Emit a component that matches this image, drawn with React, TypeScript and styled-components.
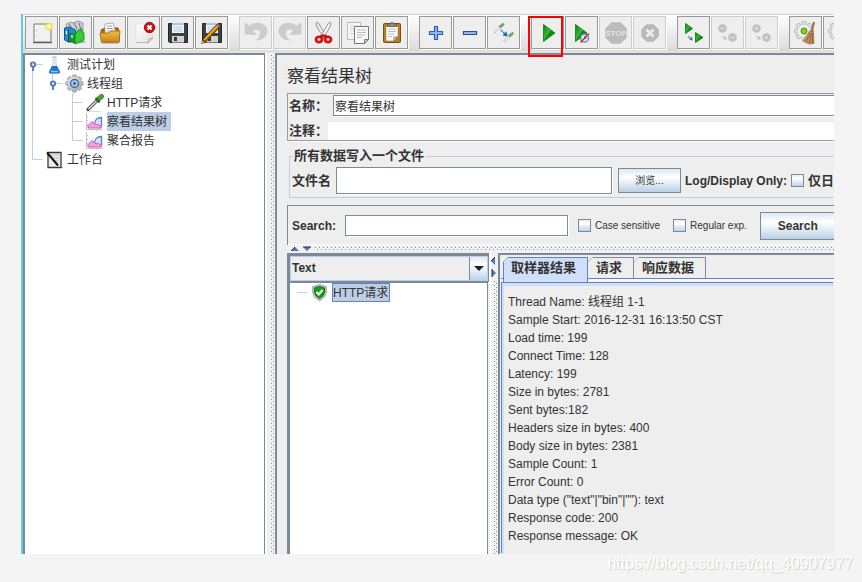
import React from "react";
import styled, { createGlobalStyle, css } from "styled-components";

const c = {
  page: "#f4f4f4",
  panel: "#eeeeee",
  dark: "#7a8a99",
  light: "#b8cfe5",
  blue: "#6382bf",
  tab: "#cfdff8",
  text: "#333333",
};

const dots = css`
  background-image: conic-gradient(from 270deg at 1px 1px, #8090a4 90deg, transparent 0),
    conic-gradient(from 270deg at 1px 1px, #8090a4 90deg, transparent 0);
  background-size: 4px 4px;
  background-position: 0 0, 2px 2px;
`;

const Global = createGlobalStyle`
  * { box-sizing: border-box; }
  body {
    margin: 0;
    background: ${c.page};
    color: ${c.text};
    font: 12px/18px "Liberation Sans", "Noto Sans CJK SC", sans-serif;
  }
  button, input, select { font: inherit; color: inherit; margin: 0; padding: 0; border-radius: 0; }
  ul { list-style: none; margin: 0; padding: 0; }
`;

const Page = styled.div`
  display: flex;
  flex-direction: column;
  min-height: 100vh;
  padding: 14px 28px 0 21px;
`;

const Window = styled.main`
  display: flex;
  flex: 1;
  flex-direction: column;
  overflow: hidden;
  border-left: 2px solid #62c9ee;
  background: ${c.panel};
`;

const Toolbar = styled.div`
  display: flex;
  gap: 11px;
  height: 39px;
  padding: 1px 0 0 2px;
  border-top: 1px solid #cfcfcf;
  background: linear-gradient(#ffffff, #dedcde 34px, #cccccc 35px, #e6e6e6 36px, #dddddd);
`;

const ToolGroup = styled.div`
  position: relative;
  display: flex;
  flex-shrink: 0;
  gap: 1px;
`;

const ToolButton = styled.button`
  flex-shrink: 0;
  width: 33px;
  height: 33px;
  border: 1px solid #999999;
  background: ${c.panel};
  box-shadow: 1px 1px 0 #ffffff;
  &:disabled { border-color: #cccccc; }
  svg { display: block; }
`;

const Highlight = styled.span`
  position: absolute;
  top: 0;
  left: -3px;
  width: 35px;
  height: 41px;
  border: 2px solid #ff0000;
  pointer-events: none;
`;

const Body = styled.div`
  display: flex;
  flex: 1;
`;

const TreePane = styled.nav`
  flex: 0 0 242px;
  border: solid ${c.dark};
  border-width: 2px 1px 0 2px;
  background: #ffffff;
`;

const VSplitter = styled.div<{ $arrows?: boolean }>`
  display: flex;
  flex: 0 0 ${(p) => (p.$arrows ? 9 : 10)}px;
  flex-direction: column;
  gap: 4px;
  padding-left: ${(p) => (p.$arrows ? 3 : 4)}px;
  padding-top: ${(p) => (p.$arrows ? 4 : 2)}px;
  border-left: 2px solid #ffffff;
  background: #f1f1f1;
  &::after { content: ""; flex: 1; width: 4px; ${dots} }
  svg { display: block; margin-left: -3px; }
`;

const HSplitter = styled.div`
  display: flex;
  align-items: center;
  gap: 4px;
  height: 8px;
  padding-left: 4px;
  background: #f1f1f1;
  &::after { content: ""; flex: 1; height: 4px; ${dots} }
`;

const TreeRow = styled.li`
  display: flex;
  align-items: center;
  height: 19px;
  svg { display: block; flex-shrink: 0; }
`;

const NodeLabel = styled.span<{ $selected?: boolean; $framed?: boolean }>`
  height: 19px;
  margin-left: 2px;
  padding: 0 ${(p) => (p.$framed ? "1px 0 0" : "4px 0 0")};
  border: ${(p) => (p.$framed ? `1px solid ${c.blue}` : "0")};
  background: ${(p) => (p.$selected ? "#bccde6" : "transparent")};
  line-height: ${(p) => (p.$framed ? 18 : 20)}px;
  white-space: nowrap;
`;

const Editor = styled.section`
  display: flex;
  flex: 1;
  flex-direction: column;
  min-width: 0;
  overflow: hidden;
  padding-left: 10px;
  border: solid ${c.dark};
  border-width: 2px 0 0 2px;
  white-space: nowrap;
`;

const Title = styled.h1`
  margin: 0;
  padding-top: 6px;
  font-size: 17px;
  font-weight: 400;
  line-height: 32px;
`;

const NameBox = styled.div`
  display: grid;
  gap: 6px;
  padding: 1px 0 0 1px;
  border: solid #9a9a9a;
  border-width: 1px 0 1px 1px;
  box-shadow: 0 1px 0 #ffffff;
`;

const NameRow = styled.div`
  display: flex;
  align-items: center;
`;

const Label = styled.label<{ $width?: number }>`
  flex: 0 0 auto;
  width: ${(p) => (p.$width ? `${p.$width}px` : "auto")};
  font-size: 13px;
  font-weight: 700;
  line-height: 18px;
`;

const LatinLabel = styled(Label)`
  font-size: 12px;
`;

const LogCaption = styled.span`
  flex: 0 0 106px;
  margin-left: 4px;
  font-weight: 700;
`;

const TextInput = styled.input<{ $width?: number; $height: number; $plain?: boolean }>`
  flex: ${(p) => (p.$width ? `0 0 ${p.$width}px` : "1")};
  min-width: 0;
  height: ${(p) => p.$height}px;
  padding-left: 1px;
  border: ${(p) => (p.$plain ? "0" : `1px solid ${c.dark}`)};
  border-right-width: ${(p) => (p.$width ? 1 : 0)}px;
  background: #ffffff;
  box-shadow: ${(p) => (p.$plain ? "none" : "1px 1px 0 #ffffff")};
  outline: none;
`;

const FileSet = styled.fieldset`
  min-width: 0;
  margin: 7px 0 0 2px;
  padding: 3px 0 3px 2px;
  border: 1px solid ${c.light};
  border-right: 0;
  legend {
    margin-left: 1px;
    padding: 0 2px 0 1px;
    font-size: 13px;
    font-weight: 700;
    line-height: 16px;
  }
`;

const Row = styled.div`
  display: flex;
  align-items: center;
`;

const PushButton = styled.button<{ $big?: boolean }>`
  flex: 0 0 ${(p) => (p.$big ? 76 : 63)}px;
  height: ${(p) => (p.$big ? 28 : 25)}px;
  margin-left: ${(p) => (p.$big ? 13 : 6)}px;
  border: 1px solid ${c.dark};
  background: linear-gradient(#dde8f3, #ffffff 35%, #e6eef6 60%, #b8cfe5);
  font-size: ${(p) => (p.$big ? 12 : 10)}px;
  font-weight: ${(p) => (p.$big ? 700 : 400)};
`;

const Check = styled.input`
  appearance: none;
  flex: 0 0 13px;
  height: 13px;
  border: 1px solid ${c.dark};
  background: linear-gradient(#e4edf6, #ffffff 30%, #bed3e8);
`;

const CheckLabel = styled.label<{ $gap: number; $bold?: boolean }>`
  display: flex;
  flex-shrink: 0;
  align-items: center;
  gap: 4px;
  margin-left: ${(p) => p.$gap}px;
  font-size: ${(p) => (p.$bold ? 13 : 10)}px;
  font-weight: ${(p) => (p.$bold ? 700 : 400)};
`;

const SearchBar = styled(Row)`
  height: 40px;
  margin-top: 7px;
  padding-left: 4px;
  border: solid ${c.dark};
  border-width: 1px 0 0 1px;
  box-shadow: inset 0 -1px 0 #ffffff;
`;

const Lower = styled.div`
  display: flex;
  flex: 1;
`;

const SamplePane = styled.div`
  display: flex;
  flex: 0 0 202px;
  flex-direction: column;
  border: solid ${c.dark};
  border-width: 2px 0 0 2px;
`;

const Combo = styled.div`
  display: flex;
  height: 27px;
  border: 1px solid ${c.dark};
  box-shadow: inset 0 0 0 1px ${c.light};
`;

const ComboSelect = styled.select`
  appearance: none;
  flex: 1;
  padding: 0 0 2px 2px;
  border: 0;
  outline: none;
  background: linear-gradient(${c.dark}, ${c.dark}) calc(100% - 18px) 0 / 1px 100% no-repeat,
    linear-gradient(#dde8f3, #ffffff 35%, #e6eef6 60%, #b8cfe5) 100% 0 / 18px 100% no-repeat;
  box-shadow: inset 0 0 0 1px ${c.light};
  font-weight: 700;
`;

const ComboArrow = styled.svg`
  align-self: center;
  margin-left: -14px;
  margin-right: 4px;
  pointer-events: none;
`;

const SampleTree = styled.ul`
  flex: 1;
  margin-right: 1px;
  border: solid ${c.dark};
  border-width: 1px 1px 0 1px;
  background: #ffffff;
`;

const ResultPane = styled.div`
  display: flex;
  flex: 1;
  flex-direction: column;
  min-width: 0;
  padding-left: 1px;
  border: solid ${c.dark};
  border-width: 2px 0 0 2px;
`;

const TabList = styled.div`
  display: flex;
  align-items: flex-start;
  height: 27px;
  padding: 2px 0 0 2px;
  background: linear-gradient(${c.blue}, ${c.blue}) 0 23px / 100% 1px no-repeat,
    linear-gradient(#f7f7f7, #f7f7f7) 0 24px / 100% 3px no-repeat;
`;

const Tab = styled.button<{ $active?: boolean }>`
  height: ${(p) => (p.$active ? 25 : 21)}px;
  padding: 0 ${(p) => (p.$active ? "11px 4px 7px" : "11px 0 8px")};
  border: solid ${(p) => (p.$active ? c.blue : c.dark)};
  border-width: 1px 1px 0 ${(p) => (p.$active ? 1 : 0)}px;
  background: linear-gradient(
      135deg,
      transparent 3px,
      ${(p) => (p.$active ? c.blue : c.dark)} 3px,
      ${(p) => (p.$active ? c.blue : c.dark)} 4px,
      ${(p) => (p.$active ? c.tab : c.panel)} 4px
    ) border-box;
  clip-path: polygon(5px 0, 100% 0, 100% 100%, 0 100%, 0 5px);
  font-size: 13px;
  font-weight: 700;
  line-height: 20px;
`;

const Results = styled.div`
  flex: 1;
  margin: 1px 0 0 1px;
  padding: 7px 0 0 4px;
  border: solid ${c.tab};
  border-width: 3px 0 0 2px;
  box-shadow: -1px -1px 0 ${c.blue};
  p { margin: 0; line-height: 18px; }
`;

const Footer = styled.footer`
  height: 28px;
  margin-right: -19px;
  color: #ffffff;
  font-size: 16px;
  line-height: 19px;
  text-align: right;
  text-shadow: 1px 1px 1px #cccccc;
`;

/* ---------- toolbar drawings, in button pixels ---------- */

const Art = ({ children }: { children: React.ReactNode }) => (
  <svg width="31" height="31" viewBox="1 1 31 31" aria-hidden="true">{children}</svg>
);

const DefsSvg = styled.svg`
  position: absolute;
`;

const Defs = () => (
  <DefsSvg width="0" height="0" aria-hidden="true">
    <defs>
      <linearGradient id="green" x1="0" y1="0" x2="1" y2="1">
        <stop offset="0" stopColor="#0a7a12" /><stop offset=".45" stopColor="#3cb83c" /><stop offset=".5" stopColor="#069406" /><stop offset="1" stopColor="#066e06" />
      </linearGradient>
      <linearGradient id="folder" x1="0" y1="0" x2="0" y2="1">
        <stop offset="0" stopColor="#f0bc4c" /><stop offset="1" stopColor="#c98814" />
      </linearGradient>
      <linearGradient id="paper" x1="0" y1="0" x2="1" y2="1">
        <stop offset="0" stopColor="#ffffff" /><stop offset="1" stopColor="#dedede" />
      </linearGradient>
      <linearGradient id="metal" x1="0" y1="0" x2="1" y2="1">
        <stop offset="0" stopColor="#f4f4f4" /><stop offset="1" stopColor="#a4a4a4" />
      </linearGradient>
      <radialGradient id="glow">
        <stop offset="0" stopColor="#ffffff" /><stop offset=".4" stopColor="#fff6a0" /><stop offset=".7" stopColor="#eedd40" /><stop offset="1" stopColor="#f4e860" stopOpacity="0" />
      </radialGradient>
    </defs>
  </DefsSvg>
);

const NewIcon = () => (
  <Art>
    <path d="M9 8h17v18H9z" fill="#f2f2f2" stroke="#77776b" />
    <path d="M8 26.7h19" stroke="#4a4a40" />
    <path d="M10.500 9v16" stroke="#fff" />
    <path d="M11 14h1M11 20h1" stroke="#999" />
    <circle cx="24" cy="10.500" r="4.500" fill="url(#glow)" />
  </Art>
);

const TemplatesIcon = () => (
  <Art>
    <ellipse cx="18" cy="26" rx="9" ry="1.500" fill="#aaa" />
    <path d="M7 8l5-2 2 1 5-2 5 2v9l-15 4z" fill="#c9cfd2" stroke="#7f8b90" strokeWidth=".8" />
    <path d="M10 8l3 5M15 7l3 6M20 7l2 7" stroke="#69767c" />
    <path d="M5.500 12l5-1 6 3v11l-7 1-4-2z" fill="#2a8bd0" stroke="#10568f" />
    <path d="M9.500 13v13" stroke="#0c4679" />
    <path d="M7.500 15v3" stroke="#fff" strokeWidth="1.300" />
    <path d="M11 17l5 2v8.500l-5-3z" fill="#109f20" stroke="#08751a" strokeWidth=".8" />
    <path d="M16 19l3-5 4-1v3l2 1v7l-9 4z" fill="#36cc32" stroke="#0c8a1c" strokeWidth=".8" />
    <path d="M13 19v3" stroke="#d5ffd5" strokeWidth="1.300" />
  </Art>
);

const OpenIcon = () => (
  <Art>
    <ellipse cx="17" cy="27" rx="10" ry="1" fill="#c2c2c2" />
    <path d="M8 14l4-2h13l1 4v10H9z" fill="#a96a0c" stroke="#855208" />
    <path d="M12 18V8l8-1 3 10z" fill="#fff" stroke="#999" strokeWidth=".8" />
    <path d="M14 10h5M14 12.500h6M14 15h6" stroke="#888" strokeWidth=".8" />
    <path d="M7 17h9l2-2h9l-1 11H8.500z" fill="url(#folder)" stroke="#a8700e" />
  </Art>
);

const CloseIcon = () => (
  <Art>
    <path d="M9 8h17v14l-5 5H9z" fill="url(#paper)" stroke="#e0e0e0" strokeWidth=".7" />
    <path d="M21 27l1-4 4-1z" fill="#fff" stroke="#999" strokeWidth=".8" />
    <path d="M9 26.500h12" stroke="#bbb" />
    <circle cx="22.500" cy="11.500" r="5.200" fill="#c81414" stroke="#991010" />
    <path d="M20.500 9.500l4 4m0-4l-4 4" stroke="#fff" strokeWidth="2" />
  </Art>
);

const Floppy = () => (
  <>
    <path d="M7.500 7.500h19v19h-18l-1-1z" fill="#3c4044" stroke="#25282b" />
    <path d="M11 7h12v10H11z" fill="#eef4fb" />
    <path d="M11 7h12v2H11z" fill="#a8c4e8" />
    <path d="M12.500 11h9M12.500 13h9M12.500 15h9" stroke="#b0c4dc" strokeWidth=".8" />
    <path d="M11 20h12v6.500H11z" fill="#d2d2d2" />
    <path d="M13 21h3v4h-3z" fill="#33373a" />
  </>
);

const SaveAsIcon = () => (
  <Art>
    <Floppy />
    <path d="M9 25L23.500 9.500" stroke="#4c2804" strokeWidth="4.600" />
    <path d="M9.500 24.500L22.500 10.500" stroke="#f0b414" strokeWidth="3" />
    <path d="M10 25L23 11.500" stroke="#55300a" strokeWidth=".8" />
    <path d="M22.500 10.500l1.500-1.500" stroke="#d06060" strokeWidth="3.400" />
    <path d="M6.500 27.500l1-3.500 2.500 2.500z" fill="#efcf94" stroke="#222" strokeWidth=".5" />
  </Art>
);

const UndoShape = () => (
  <path d="M6 7v11l11 .5-3.500-4c4-2.500 8-1 8 3 0 3-2 5.500-4 6.500 6 0 11-4 10.500-10C27 7 17 5 10.500 10z" fill="#cdcdcd" stroke="#c2c2c2" strokeWidth=".6" />
);

const CutIcon = () => (
  <Art>
    <path d="M9 7c1-1.500 2-.5 3 1l7 12-2 2C14 17 9 11 9 7z" fill="#eee" stroke="#777" strokeWidth=".8" />
    <path d="M24 7c-1-1.500-2-.5-3 1l-7 12 2 2c3-5 8-11 8-15z" fill="#f7f7f7" stroke="#777" strokeWidth=".8" />
    <ellipse cx="12" cy="23.500" rx="3" ry="2.600" fill="none" stroke="#d61414" strokeWidth="2.800" />
    <ellipse cx="21" cy="23.500" rx="3" ry="2.600" fill="none" stroke="#d61414" strokeWidth="2.800" />
    <path d="M13 20.500l3.500-1 3.500 1" stroke="#c81010" strokeWidth="2.200" fill="none" />
  </Art>
);

const CopyIcon = () => (
  <Art>
    <path d="M6.500 6.500h13v17h-13z" fill="#f6f6f6" stroke="#bbb" />
    <path d="M9 10h8M9 12.500h4M9 15h4M9 17.500h4" stroke="#d0d0d0" />
    <path d="M13.500 10.500h14v13l-4 4h-10z" fill="#f8f8f8" stroke="#777" />
    <path d="M16 14h9M16 16.500h9M16 19h8M16 21.500h5" stroke="#bbb" />
    <path d="M23.500 27.500v-4h4z" fill="#ccc" stroke="#666" strokeWidth=".8" />
  </Art>
);

const PasteIcon = () => (
  <Art>
    <rect x="8.500" y="7.500" width="17" height="19" rx="1" fill="#bf7c14" stroke="#7d4c06" />
    <path d="M11 10h12v11l-4 4h-8z" fill="#fafafa" stroke="#888" strokeWidth=".6" />
    <path d="M13 13h8M13 15.500h8M13 18h6M13 20.500h4" stroke="#bbb" />
    <path d="M19 25v-4h4z" fill="#ddd" stroke="#666" strokeWidth=".8" />
    <path d="M12 10.500c0-3 1.500-2.500 3-2.500 0-2 4-2 4 0 1.500 0 3-.5 3 2.500z" fill="#8a8a82" stroke="#55554d" strokeWidth=".8" />
  </Art>
);

const PlusIcon = () => (
  <Art><path d="M15.500 10.500h3v5h5v3h-5v5h-3v-5h-5v-3h5z" fill="#8fb8ea" stroke="#2c62b4" strokeWidth="1.200" /></Art>
);
const MinusIcon = () => (
  <Art><path d="M10.500 15.500h13v3h-13z" fill="#8fb8ea" stroke="#2c4f8a" strokeWidth="1.200" /></Art>
);

const Dropper = ({ x, y }: { x: number; y: number }) => (
  <g transform={`translate(${x} ${y})`}>
    <path d="M.5 9.500L6 4" stroke="#a8b2a8" strokeWidth="2.200" />
    <path d="M1 9L6 4" stroke="#f4f8f4" strokeWidth="1.100" />
    <path d="M6.500 3.500l2.500-2" stroke="#6aa560" strokeWidth="2.800" strokeLinecap="round" />
    <path d="M5 2.500l2.500 2.500" stroke="#6c8c68" />
  </g>
);

const ToggleIcon = () => (
  <Art>
    <Dropper x={7} y={7} />
    <Dropper x={16.5} y={16} />
    <path d="M14 14l4 4" stroke="#2f74d8" strokeWidth="1.500" strokeDasharray="2 1" />
    <path d="M20.500 20.500l-5-1 4-4z" fill="#1c62cc" />
  </Art>
);

const StartIcon = () => (
  <Art><path d="M12.500 8.500L24 17 12.500 25.500z" fill="url(#green)" stroke="#0b7c12" strokeWidth=".8" /></Art>
);

const StartNoPauseIcon = () => (
  <Art>
    <path d="M10.500 8.500L22 17l-11.500 8.500z" fill="url(#green)" stroke="#0b7c12" strokeWidth=".8" />
    <circle cx="19.500" cy="22" r="4" fill="#dfe9f4" stroke="#4a86bd" strokeWidth="1.300" />
    <path d="M19.500 20v2.500h2" stroke="#4a86bd" fill="none" />
    <path d="M15.500 26.500l8.500-9" stroke="#e02020" strokeWidth="1.300" />
  </Art>
);

const StopText = styled.text`
  font: 700 8px "Liberation Sans", sans-serif;
`;

const StopIcon = () => (
  <Art>
    <path d="M12.500 6.500h9l6 6v9l-6 6h-9l-6-6v-9z" fill="#bcbcbc" stroke="#c6c6c6" />
    <StopText x="17" y="20" textAnchor="middle" fill="#e2e2e2">STOP</StopText>
  </Art>
);

const ShutdownIcon = () => (
  <Art>
    <path d="M13.500 8.500h7l5 5v7l-5 5h-7l-5-5v-7z" fill="#b9b9b9" stroke="#c4c4c4" />
    <path d="M13.500 13.500l7 7m0-7l-7 7" stroke="#ececec" strokeWidth="2.600" />
  </Art>
);

const RemoteStartIcon = () => (
  <Art>
    <path d="M8.500 7.500l7 5-7 5z" fill="url(#green)" stroke="#0b7c12" strokeWidth=".8" />
    <path d="M18.500 16.500l7.500 5-7.500 5z" fill="url(#green)" stroke="#0b7c12" strokeWidth=".8" />
    <path d="M11 20.500l2 1.500" stroke="#5f8cc0" strokeWidth="1.500" />
    <path d="M15.500 24.500l-3.500-1 3-3z" fill="#3c70b0" />
  </Art>
);

const RemoteOffIcon = ({ cross }: { cross?: boolean }) => (
  <Art>
    <circle cx="11.500" cy="12.500" r="4.300" fill="#c0c0c0" />
    <circle cx="21.500" cy="21.500" r="4.300" fill="#c0c0c0" />
    <path d={cross ? "M10 11l3 3m0-3l-3 3M20 20l3 3m0-3l-3 3" : "M9 12.500h5M19 21.500h5"} stroke="#dadada" strokeWidth="1.300" />
    <path d="M11 20l2 1.500" stroke="#ccc" strokeWidth="1.500" />
    <path d="M15.500 24l-3.500-1 3-3z" fill="#bdbdbd" />
  </Art>
);

const teeth = [0, 45, 90, 135, 180, 225, 270, 315];

const ClearIcon = () => (
  <Art>
    {teeth.map((a) => (
      <rect key={a} x="13" y="5.500" width="4" height="4" rx="1" fill="#e8ebeb" stroke="#b4b8b8" transform={`rotate(${a} 15 15)`} />
    ))}
    <circle cx="15" cy="15" r="7" fill="#eef0f0" stroke="#c4c8c8" />
    <circle cx="15" cy="15" r="3" fill="#86cc1c" stroke="#4d8c0c" />
    <path d="M25 6l-3 12" stroke="#9a6c3c" strokeWidth="2" />
    <path d="M20.500 15l4 .5.5 12-5 .5-6-3z" fill="#c49460" stroke="#97683a" strokeWidth=".7" />
    <path d="M21 17l-4 9M22.500 17l-2 10M23.500 17l0 10" stroke="#815427" strokeWidth=".8" />
  </Art>
);

/* ---------- tree drawings ---------- */

type Guide = "none" | "pipe" | "tee" | "elbow" | "dash" | "root" | "open";

const guidePaths: Record<Guide, string> = {
  none: "",
  pipe: "M7.500 0v19",
  tee: "M7.500 0v19M7.500 9.500h10",
  elbow: "M7.500 0v9.500h10",
  dash: "M7.500 9.500h10",
  root: "M7.500 9v10M7.500 9.500h10",
  open: "M7.500 0v9.500h10",
};

const GuideCell = ({ kind }: { kind: Guide }) => (
  <svg width="20" height="19" viewBox="0 0 20 19" aria-hidden="true">
    <path d={guidePaths[kind]} fill="none" stroke={c.light} />
    {(kind === "root" || kind === "open") && (
      <>
        <path d="M8 11v5" stroke="#5f82ba" strokeWidth="2" />
        <circle cx="8" cy="9.500" r="2.200" fill="#dfe8f4" stroke="#5577b2" strokeWidth="1.800" />
      </>
    )}
  </svg>
);

const NodeArt = ({ children }: { children: React.ReactNode }) => (
  <svg width="20" height="19" viewBox="0 0 20 19" aria-hidden="true">{children}</svg>
);

const FlaskIcon = () => (
  <NodeArt>
    <path d="M8 2.500h3v6l4 8.500q0 1.500-1.500 1.500h-8Q4 18.500 4 17l4-8.500z" fill="#e6edf4" stroke="#c3ccd6" strokeWidth=".8" />
    <path d="M7 11h5l3 6q0 1.500-1.500 1.500h-8Q4 18.500 4 17z" fill="#1f72d0" />
    <path d="M6 16.500h7" stroke="#8cc4f8" strokeWidth="1.500" />
    <path d="M7.500 2h4" stroke="#b0b8c0" />
  </NodeArt>
);

const GearIcon = () => (
  <NodeArt>
    {teeth.map((a) => (
      <rect key={a} x="7.500" y=".8" width="4" height="4" rx="1" fill="#c4c4c4" stroke="#8e8e8e" strokeWidth=".6" transform={`rotate(${a} 9.500 9.500)`} />
    ))}
    <circle cx="9.500" cy="9.500" r="7" fill="url(#metal)" stroke="#a2a2a2" strokeWidth=".6" />
    <circle cx="9.500" cy="9.500" r="4" fill="#b4cfee" stroke="#456a9c" strokeWidth="1.500" />
    <path d="M8.500 7.500l3 2-3 2z" fill="#284a78" />
  </NodeArt>
);

const SamplerIcon = () => (
  <NodeArt>
    <path d="M3 16.500L12 7.500" stroke="#4b554b" strokeWidth="3.200" strokeLinecap="round" />
    <path d="M3.500 16L12 7.500" stroke="#dfe6df" strokeWidth="1.400" />
    <path d="M13 6.500l3.500-3" stroke="#4c9a3c" strokeWidth="5" strokeLinecap="round" />
    <path d="M10.500 5l4 4.500" stroke="#2f5a2c" strokeWidth="2" />
    <path d="M4 18.500h12" stroke="#dcdcdc" />
  </NodeArt>
);

const ChartIcon = () => (
  <NodeArt>
    <path d="M1.500 1v16.500h16" fill="none" stroke="#c4c4c4" />
    <path d="M1 4.500h2M1 8.500h2M1 12.500h2M6.500 17v2M11.500 17v2" stroke="#c4c4c4" />
    <path d="M9.500 12.500c0-4 2.500-7 7-7v8l-4 2z" fill="#d4e4fa" stroke="#4f80d4" strokeWidth="1.300" />
    <path d="M3 16v-2.500L7 9.500l4 3.500 2-1 3.500 3v1z" fill="#f4a0dc" stroke="#cf5cb0" />
  </NodeArt>
);

const BenchIcon = () => (
  <NodeArt>
    <path d="M3 2.500h13v15H3z" fill="#e9edee" stroke="#3a3a3a" strokeWidth="1.300" />
    <path d="M6 5h8M6 8h8M8 11h6" stroke="#b8bec2" />
    <path d="M2 2.500l11 13" stroke="#151515" strokeWidth="2" />
    <path d="M15 17.500h2.500" stroke="#555" />
  </NodeArt>
);

const ShieldIcon = () => (
  <NodeArt>
    <path d="M9.500 1.500l7 2v5.500q-.5 5.500-7 9-6.500-3.500-7-9V3.500z" fill="#bcbcbc" stroke="#a4a4a4" strokeWidth=".8" />
    <path d="M9.500 3.500l5 1.500v4q-.5 4-5 6.500Q5 13 4.500 9V5z" fill="#14a01c" stroke="#0a7a12" />
    <path d="M6.500 9l2.200 2.500L12.500 7" fill="none" stroke="#fff" strokeWidth="2" />
  </NodeArt>
);

const nodes: { label: string; guides: Guide[]; icon: React.ReactNode; selected?: boolean }[] = [
  { label: "测试计划", guides: ["root"], icon: <FlaskIcon /> },
  { label: "线程组", guides: ["pipe", "open"], icon: <GearIcon /> },
  { label: "HTTP请求", guides: ["pipe", "none", "tee"], icon: <SamplerIcon /> },
  { label: "察看结果树", guides: ["pipe", "none", "tee"], icon: <ChartIcon />, selected: true },
  { label: "聚合报告", guides: ["pipe", "none", "elbow"], icon: <ChartIcon /> },
  { label: "工作台", guides: ["elbow"], icon: <BenchIcon /> },
];

type Tool = { name: string; icon: React.ReactNode; off?: boolean };

const toolGroups: Tool[][] = [
  [
    { name: "New", icon: <NewIcon /> },
    { name: "Templates", icon: <TemplatesIcon /> },
    { name: "Open", icon: <OpenIcon /> },
    { name: "Close", icon: <CloseIcon /> },
    { name: "Save", icon: <Art><Floppy /></Art> },
    { name: "Save as", icon: <SaveAsIcon /> },
  ],
  [
    { name: "Undo", icon: <Art><UndoShape /></Art>, off: true },
    { name: "Redo", icon: <Art><g transform="matrix(-1 0 0 1 34 0)"><UndoShape /></g></Art>, off: true },
    { name: "Cut", icon: <CutIcon /> },
    { name: "Copy", icon: <CopyIcon /> },
    { name: "Paste", icon: <PasteIcon /> },
  ],
  [
    { name: "Expand all", icon: <PlusIcon /> },
    { name: "Collapse all", icon: <MinusIcon /> },
    { name: "Toggle", icon: <ToggleIcon /> },
  ],
  [
    { name: "Start", icon: <StartIcon /> },
    { name: "Start no pauses", icon: <StartNoPauseIcon /> },
    { name: "Stop", icon: <StopIcon />, off: true },
    { name: "Shutdown", icon: <ShutdownIcon />, off: true },
  ],
  [
    { name: "Remote start all", icon: <RemoteStartIcon /> },
    { name: "Remote stop all", icon: <RemoteOffIcon />, off: true },
    { name: "Remote shutdown all", icon: <RemoteOffIcon cross />, off: true },
  ],
  [
    { name: "Clear", icon: <ClearIcon /> },
    { name: "Clear all", icon: <ClearIcon /> },
  ],
];

const results = [
  "Thread Name: 线程组 1-1",
  "Sample Start: 2016-12-31 16:13:50 CST",
  "Load time: 199",
  "Connect Time: 128",
  "Latency: 199",
  "Size in bytes: 2781",
  "Sent bytes:182",
  "Headers size in bytes: 400",
  "Body size in bytes: 2381",
  "Sample Count: 1",
  "Error Count: 0",
  'Data type ("text"|"bin"|""): text',
  "Response code: 200",
  "Response message: OK",
];

export default function App() {
  return (
    <Page>
      <Global />
      <Defs />
      <Window>
        <Toolbar role="toolbar">
          {toolGroups.map((group, i) => (
            <ToolGroup key={i}>
              {group.map((t) => (
                <ToolButton key={t.name} type="button" aria-label={t.name} disabled={t.off}>{t.icon}</ToolButton>
              ))}
              {i === 3 && <Highlight />}
            </ToolGroup>
          ))}
        </Toolbar>
        <Body>
          <TreePane>
            <ul>
              {nodes.map((n) => (
                <TreeRow key={n.label}>
                  {n.guides.map((g, i) => <GuideCell key={i} kind={g} />)}
                  {n.icon}
                  <NodeLabel $selected={n.selected}>{n.label}</NodeLabel>
                </TreeRow>
              ))}
            </ul>
          </TreePane>
          <VSplitter />
          <Editor>
            <Title>察看结果树</Title>
            <NameBox>
              <NameRow>
                <Label htmlFor="name" $width={44}>名称：</Label>
                <TextInput id="name" $height={21} defaultValue="察看结果树" />
              </NameRow>
              <NameRow>
                <Label htmlFor="comment" $width={39}>注释：</Label>
                <TextInput id="comment" $height={18} $plain />
              </NameRow>
            </NameBox>
            <FileSet>
              <legend>所有数据写入一个文件</legend>
              <Row>
                <Label htmlFor="file" $width={44}>文件名</Label>
                <TextInput id="file" $width={276} $height={27} />
                <PushButton type="button">浏览...</PushButton>
                <LogCaption>Log/Display Only:</LogCaption>
                <CheckLabel $gap={0} $bold><Check type="checkbox" />仅日</CheckLabel>
              </Row>
            </FileSet>
            <SearchBar>
              <LatinLabel htmlFor="search" $width={53}>Search:</LatinLabel>
              <TextInput id="search" $width={223} $height={21} />
              <CheckLabel $gap={10}><Check type="checkbox" />Case sensitive</CheckLabel>
              <CheckLabel $gap={13}><Check type="checkbox" />Regular exp.</CheckLabel>
              <PushButton type="button" $big>Search</PushButton>
            </SearchBar>
            <HSplitter>
              <svg width="20" height="6" viewBox="0 0 20 6" aria-hidden="true">
                <path d="M0 5l4-4 4 4z" fill="#4f74b8" /><path d="M0 5l4-4" stroke="#333" />
                <path d="M12 1h8l-4 4z" fill="#4f74b8" /><path d="M12 1h8" stroke="#333" />
              </svg>
            </HSplitter>
            <Lower>
              <SamplePane>
                <Combo>
                  <ComboSelect aria-label="Renderer" defaultValue="Text"><option>Text</option></ComboSelect>
                  <ComboArrow width="10" height="5" viewBox="0 0 10 5" aria-hidden="true"><path d="M0 0h10L5 5z" fill="#222" /></ComboArrow>
                </Combo>
                <SampleTree>
                  <TreeRow>
                    <GuideCell kind="dash" />
                    <ShieldIcon />
                    <NodeLabel $selected $framed>HTTP请求</NodeLabel>
                  </TreeRow>
                </SampleTree>
              </SamplePane>
              <VSplitter $arrows>
                <svg width="5" height="20" viewBox="0 0 5 20" aria-hidden="true">
                  <path d="M4 0v8L0 4z" fill="#4f74b8" /><path d="M4 0L0 4" stroke="#333" />
                  <path d="M1 12v8l4-4z" fill="#4f74b8" /><path d="M1 12v8" stroke="#333" />
                </svg>
              </VSplitter>
              <ResultPane>
                <TabList role="tablist">
                  <Tab type="button" role="tab" aria-selected="true" $active>取样器结果</Tab>
                  <Tab type="button" role="tab" aria-selected="false">请求</Tab>
                  <Tab type="button" role="tab" aria-selected="false">响应数据</Tab>
                </TabList>
                <Results role="tabpanel">
                  {results.map((r) => <p key={r}>{r}</p>)}
                </Results>
              </ResultPane>
            </Lower>
          </Editor>
        </Body>
      </Window>
      <Footer>https://blog.csdn.net/qq_40907977</Footer>
    </Page>
  );
}
